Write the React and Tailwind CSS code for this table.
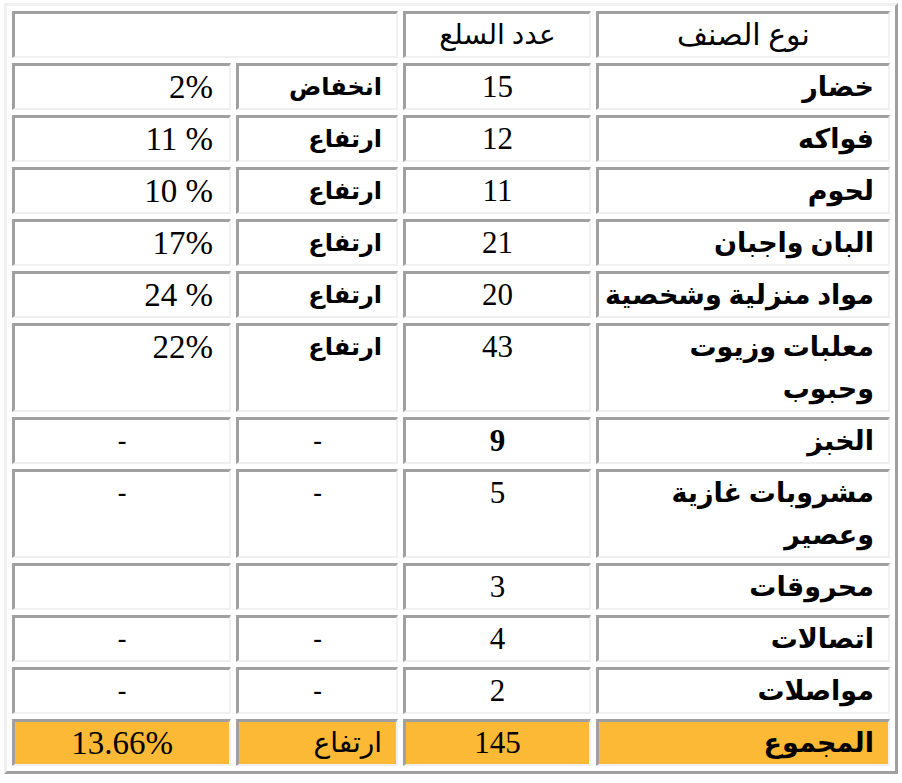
import React from 'react'

const rows = [
  { name: 'خضار', count: '15', trend: 'انخفاض', pct: '2%' },
  { name: 'فواكه', count: '12', trend: 'ارتفاع', pct: '11 %' },
  { name: 'لحوم', count: '11', trend: 'ارتفاع', pct: '10 %' },
  { name: 'البان واجبان', count: '21', trend: 'ارتفاع', pct: '17%' },
  { name: 'مواد منزلية وشخصية', count: '20', trend: 'ارتفاع', pct: '24 %' },
  { name: ['معلبات وزيوت', 'وحبوب'], count: '43', trend: 'ارتفاع', pct: '22%' },
  { name: 'الخبز', count: '9', bold: true, trend: '-', pct: '-' },
  { name: ['مشروبات غازية', 'وعصير'], count: '5', trend: '-', pct: '-' },
  { name: 'محروقات', count: '3', trend: '', pct: '' },
  { name: 'اتصالات', count: '4', trend: '-', pct: '-' },
  { name: 'مواصلات', count: '2', trend: '-', pct: '-' },
]

const cell = 'border-t-[3px] border-l-[3px] border-r-2 border-b-2 border-t-[#a0a0a0] border-l-[#a0a0a0] border-r-[#f0f0f0] border-b-[#f0f0f0] align-top leading-[42px] p-0'

export default function App() {
  return (
    <div className="bg-white min-h-screen">
      <table
        dir="rtl"
        className="table-fixed border-separate border-spacing-[5px] w-[894px] mt-[3px] ml-[4px] border-t-[3px] border-l-[3px] border-r-[3px] border-b-[3px] border-t-[#f0f0f0] border-l-[#f0f0f0] border-r-[#a0a0a0] border-b-[#a0a0a0] text-black font-['Liberation_Serif','DejaVu_Sans',serif]"
      >
        <colgroup>
          <col className="w-[294px]" />
          <col className="w-[188px]" />
          <col className="w-[162px]" />
          <col className="w-[219px]" />
        </colgroup>
        <tbody>
          <tr>
            <td className={cell + ' text-center text-[30px]'}>نوع الصنف</td>
            <td className={cell + ' text-center text-[28px]'}>عدد السلع</td>
            <td colSpan={2} className={cell}></td>
          </tr>
          {rows.map((r, i) => (
            <tr key={i}>
              <td className={cell + ' text-right pr-[14px] text-[27px] font-bold'}>
                {Array.isArray(r.name) ? (
                  <>
                    {r.name[0]}
                    <br />
                    {r.name[1]}
                  </>
                ) : (
                  <span className="whitespace-nowrap">{r.name}</span>
                )}
              </td>
              <td className={cell + ' text-center text-[31px]' + (r.bold ? ' font-bold' : '')}>{r.count}</td>
              {r.trend === '-' ? (
                <td className={cell + ' text-center text-[26px] font-bold'}>-</td>
              ) : (
                <td className={cell + ' text-right pr-[14px] text-[24px] font-bold'}>{r.trend}</td>
              )}
              {r.pct === '-' ? (
                <td className={cell + ' text-center text-[26px] font-bold'}>-</td>
              ) : (
                <td className={cell + ' text-right pr-[16px] text-[33px]'}>
                  <span dir="ltr">{r.pct}</span>
                </td>
              )}
            </tr>
          ))}
          <tr>
            <td className={cell + ' bg-[#fcb935] text-right pr-[14px] text-[27px] font-bold'}>المجموع</td>
            <td className={cell + ' bg-[#fcb935] text-center text-[31px]'}>145</td>
            <td className={cell + ' bg-[#fcb935] text-right pr-[14px] text-[28px]'}>ارتفاع</td>
            <td className={cell + ' bg-[#fcb935] text-center text-[33px]'}>
              <span dir="ltr">13.66%</span>
            </td>
          </tr>
        </tbody>
      </table>
    </div>
  )
}
